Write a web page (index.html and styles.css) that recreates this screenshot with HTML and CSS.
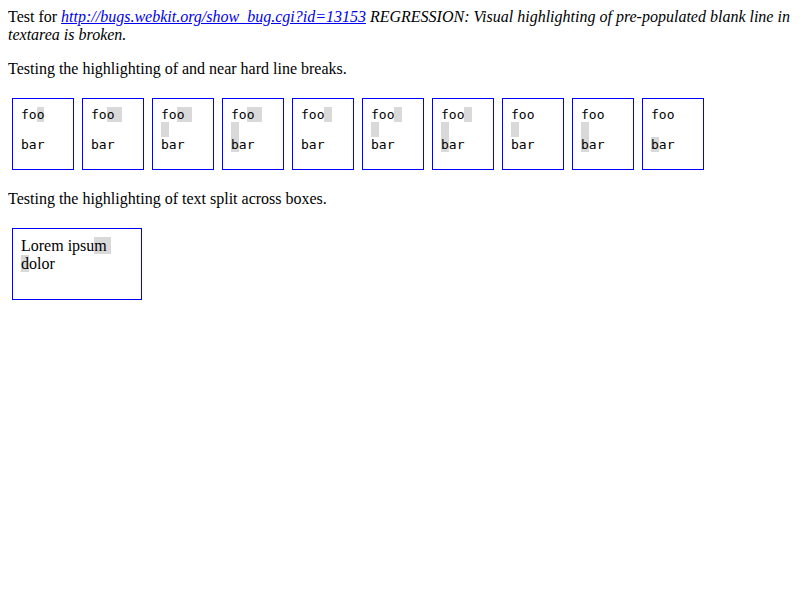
FILE: index.html
```html
<!DOCTYPE html>
<html>
<head>
<meta charset="utf-8">
<link rel="stylesheet" href="styles.css">
</head>
<body>
<div class="intro">Test for <i><a href="#">http://bugs.webkit.org/show_bug.cgi?id=13153</a> REGRESSION: Visual highlighting of pre-populated blank line in textarea is broken.</i></div>
<p class="label">Testing the highlighting of and near hard line breaks.</p>
<div class="row">
<div class="box mono">fo<span class="hl">o</span>

bar</div>
<div class="box mono">fo<span class="hl">o </span>

bar</div>
<div class="box mono">fo<span class="hl">o </span>
<span class="hl"> </span>
bar</div>
<div class="box mono">fo<span class="hl">o </span>
<span class="hl"> </span>
<span class="hl">b</span>ar</div>
<div class="box mono">foo<span class="hl"> </span>

bar</div>
<div class="box mono">foo<span class="hl"> </span>
<span class="hl"> </span>
bar</div>
<div class="box mono">foo<span class="hl"> </span>
<span class="hl"> </span>
<span class="hl">b</span>ar</div>
<div class="box mono">foo
<span class="hl"> </span>
bar</div>
<div class="box mono">foo
<span class="hl"> </span>
<span class="hl">b</span>ar</div>
<div class="box mono">foo

<span class="hl">b</span>ar</div>
</div>
<p class="label">Testing the highlighting of text split across boxes.</p>
<div class="row">
<div class="box serif">Lorem ipsu<span class="hl">m&nbsp;</span><br><span class="hl">d</span>olor</div>
</div>
</body>
</html>
```
FILE: styles.css
```css
body {
  margin: 8px;
  font-family: "Liberation Serif", "Times New Roman", serif;
  font-size: 16px;
  color: #000;
  background: #fff;
}
.intro {
  line-height: 18px;
}
.intro a {
  color: #0000ee;
}
.label {
  margin: 16px 0;
  line-height: 18px;
}
.row {
  display: flex;
}
.box {
  margin: 4px;
  border: 1px solid #0000ff;
  box-sizing: border-box;
}
.mono {
  width: 62px;
  height: 72px;
  padding: 8px;
  font-family: "DejaVu Sans Mono", monospace;
  font-size: 13px;
  line-height: 15px;
  white-space: pre;
}
.serif {
  width: 130px;
  height: 72px;
  padding: 8px;
  line-height: 18px;
}
.hl {
  background: #d9d9d9;
}
```
